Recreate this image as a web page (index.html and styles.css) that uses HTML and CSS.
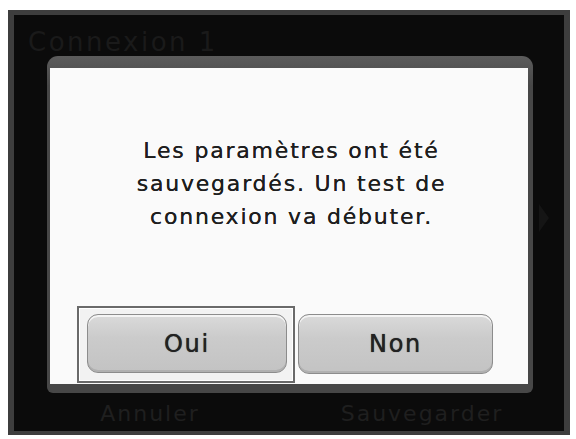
FILE: index.html
```html
<!DOCTYPE html>
<html lang="fr">
<head>
<meta charset="utf-8">
<title>Connexion 1</title>
<link rel="stylesheet" href="styles.css">
</head>
<body>
<div class="screen">
  <div class="header"><span class="title">Connexion 1</span></div>
  <div class="dialog">
    <div class="panel">
      <p class="message">Les paramètres ont été<br>sauvegardés. Un test de<br>connexion va débuter.</p>
      <div class="actions">
        <div class="focus"><button class="btn">Oui</button></div>
        <button class="btn btn-non">Non</button>
      </div>
    </div>
  </div>
  <div class="footer">
    <span class="foot-label">Annuler</span>
    <span class="foot-label">Sauvegarder</span>
  </div>
  <svg class="side-arrow" width="12" height="30" viewBox="0 0 12 30"><path d="M1 1 L11 15 L1 29 Z" fill="#151515"/></svg>
</div>
</body>
</html>
```
FILE: styles.css
```css
html, body {
  margin: 0;
  padding: 0;
  background: #ffffff;
}
body {
  width: 576px;
  height: 439px;
  overflow: hidden;
  font-family: "DejaVu Sans", "Liberation Sans", sans-serif;
}
.screen {
  position: relative;
  box-sizing: border-box;
  width: 562px;
  height: 425px;
  margin: 10px 0 0 8px;
  border: 5px solid #3e3e3e;
  border-left-width: 6px;
  border-right-width: 6px;
  border-bottom-width: 4px;
  background: #0b0b0b;
  display: flex;
  flex-direction: column;
}
.header {
  height: 41px;
  display: flex;
  align-items: flex-end;
  padding-left: 14px;
}
.title {
  font-size: 26px;
  line-height: 28px;
  letter-spacing: 2.5px;
  color: #1a1a1a;
}
.dialog {
  height: 337px;
  margin: 0 31px 0 33px;
  box-sizing: border-box;
  padding: 12px 5px 9px 3px;
  background: linear-gradient(#5c5c5c, #474747 30px, #474747);
  border-radius: 11px 11px 6px 6px;
  display: flex;
  flex-direction: column;
}
.panel {
  flex: 1;
  background: #fafafa;
  display: flex;
  flex-direction: column;
  padding: 66px 0 1px 27px;
  box-sizing: border-box;
}
.message {
  margin: 0 0 0 -22px;
  font-size: 22px;
  line-height: 33px;
  letter-spacing: 1.8px;
  text-align: center;
  color: #1e1e1e;
  text-shadow: 0 0 0.6px #1e1e1e;
}
.actions {
  margin-top: auto;
  display: flex;
  align-items: flex-start;
  gap: 3px;
}
.focus {
  border: 2px solid #6a6a6a;
  padding: 6px 6px 8px 8px;
  background: #f2f2f2;
  box-shadow: inset 0 0 0 1px #ffffff;
}
.btn {
  width: 200px;
  height: 59px;
  margin: 0;
  padding: 0;
  border: 1px solid #8c8c8c;
  border-radius: 11px;
  background: linear-gradient(#dadada, #cbcbcb 40%, #c3c3c3);
  box-shadow: inset 0 2px 0 #f4f4f4, inset 0 -2px 0 #b0b0b0;
  font-family: "DejaVu Sans", "Liberation Sans", sans-serif;
  font-weight: normal;
  font-size: 24px;
  letter-spacing: 1.8px;
  color: #222222;
  text-shadow: 0 0 0.8px #222222;
}
.btn-non {
  width: 195px;
  height: 60px;
  margin-top: 8px;
}
.footer {
  flex: 1;
  display: grid;
  grid-template-columns: 1fr 1fr;
  align-items: center;
  padding: 3px 6px 0 0;
}
.foot-label {
  text-align: center;
  font-size: 22px;
  letter-spacing: 2px;
  color: #1f1f1f;
}
.side-arrow {
  position: absolute;
  right: 14px;
  top: 188px;
}
```
